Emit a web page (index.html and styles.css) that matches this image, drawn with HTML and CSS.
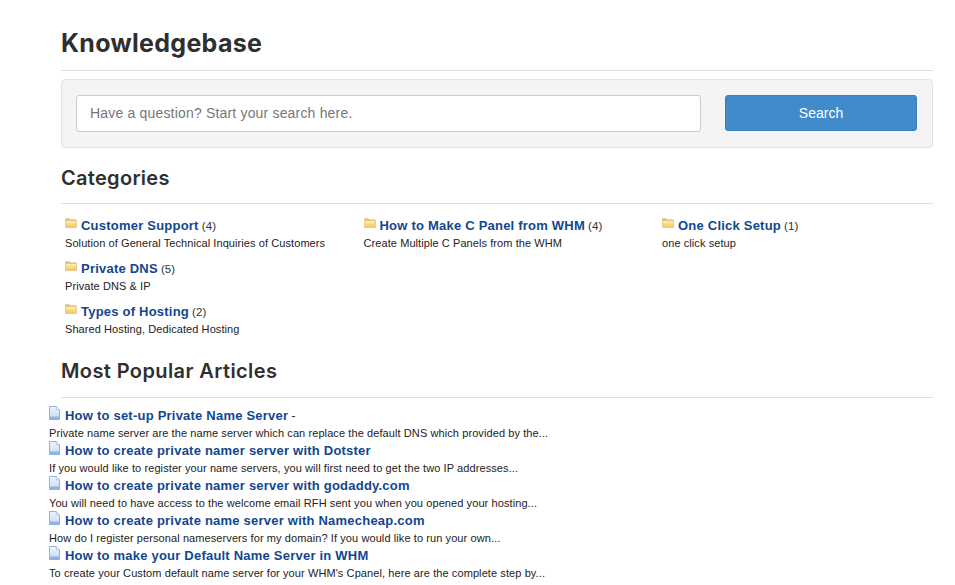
FILE: index.html
```html
<!DOCTYPE html>
<html lang="en">
<head>
<meta charset="utf-8">
<title>Knowledgebase</title>
<link rel="stylesheet" href="styles.css">
</head>
<body>
<svg class="defs" width="0" height="0" aria-hidden="true">
  <defs>
    <linearGradient id="fg" x1="0" y1="0" x2="0" y2="1"><stop offset="0" stop-color="#fdf0b0"/><stop offset="1" stop-color="#f2c862"/></linearGradient>
    <linearGradient id="dg" x1="0" y1="0" x2="0" y2="1"><stop offset="0" stop-color="#eef5fc"/><stop offset="1" stop-color="#c4daf3"/></linearGradient>
    <symbol id="folder" viewBox="0 0 12 10">
      <path d="M.5 9.5V1.2c0-.4.3-.7.7-.7h3l1 1.3h5.6c.4 0 .7.3.7.7v7z" fill="#e8c27a" stroke="#e3c58d" stroke-width=".8"/>
      <rect x="1" y="3" width="10" height="6" fill="url(#fg)"/>
    </symbol>
    <symbol id="doc" viewBox="0 0 11 14">
      <path d="M.5.5h6.8l3.2 3.2v9.8H.5z" fill="url(#dg)" stroke="#8fb2de"/>
      <path d="M7.3.5v3.2h3.2" fill="#fff" stroke="#8fb2de" stroke-width=".7"/>
      <rect x="1" y="10.5" width="9" height="2.5" fill="#8fb4e3"/>
    </symbol>
  </defs>
</svg>
<main class="page">
  <h1 class="title">Knowledgebase</h1>
  <form class="search-well">
    <input class="search-input" type="text" placeholder="Have a question? Start your search here.">
    <button class="search-btn" type="button">Search</button>
  </form>

  <h2 class="section-title">Categories</h2>
  <div class="cats">
    <div class="cat">
      <div class="cat-head"><svg class="ic-folder"><use href="#folder"/></svg><a class="link" href="#">Customer Support</a> <span class="count">(4)</span></div>
      <p class="desc">Solution of General Technical Inquiries of Customers</p>
    </div>
    <div class="cat">
      <div class="cat-head"><svg class="ic-folder"><use href="#folder"/></svg><a class="link" href="#">How to Make C Panel from WHM</a> <span class="count">(4)</span></div>
      <p class="desc">Create Multiple C Panels from the WHM</p>
    </div>
    <div class="cat">
      <div class="cat-head"><svg class="ic-folder"><use href="#folder"/></svg><a class="link" href="#">One Click Setup</a> <span class="count">(1)</span></div>
      <p class="desc">one click setup</p>
    </div>
    <div class="cat">
      <div class="cat-head"><svg class="ic-folder"><use href="#folder"/></svg><a class="link" href="#">Private DNS</a> <span class="count">(5)</span></div>
      <p class="desc">Private DNS &amp; IP</p>
    </div>
    <div class="cat cat-first">
      <div class="cat-head"><svg class="ic-folder"><use href="#folder"/></svg><a class="link" href="#">Types of Hosting</a> <span class="count">(2)</span></div>
      <p class="desc">Shared Hosting, Dedicated Hosting</p>
    </div>
  </div>

  <h2 class="section-title popular">Most Popular Articles</h2>
  <div class="articles">
    <div class="article">
      <div class="art-head"><svg class="ic-doc"><use href="#doc"/></svg><a class="link" href="#">How to set-up Private Name Server</a> <span class="dash">-</span></div>
      <p class="desc art-desc">Private name server are the name server which can replace the default DNS which provided by the...</p>
    </div>
    <div class="article">
      <div class="art-head"><svg class="ic-doc"><use href="#doc"/></svg><a class="link" href="#">How to create private namer server with Dotster</a></div>
      <p class="desc art-desc">If you would like to register your name servers, you will first need to get the two IP addresses...</p>
    </div>
    <div class="article">
      <div class="art-head"><svg class="ic-doc"><use href="#doc"/></svg><a class="link" href="#">How to create private namer server with godaddy.com</a></div>
      <p class="desc art-desc">You will need to have access to the welcome email RFH sent you when you opened your hosting...</p>
    </div>
    <div class="article">
      <div class="art-head"><svg class="ic-doc"><use href="#doc"/></svg><a class="link" href="#">How to create private name server with Namecheap.com</a></div>
      <p class="desc art-desc">How do I register personal nameservers for my domain? If you would like to run your own...</p>
    </div>
    <div class="article">
      <div class="art-head"><svg class="ic-doc"><use href="#doc"/></svg><a class="link" href="#">How to make your Default Name Server in WHM</a></div>
      <p class="desc art-desc">To create your Custom default name server for your WHM's Cpanel, here are the complete step by...</p>
    </div>
  </div>
</main>
</body>
</html>
```

FILE: styles.css
```css
html, body { margin: 0; padding: 0; background: #fff; }
body { font-family: "Liberation Sans", Arial, sans-serif; color: #333; overflow: hidden; height: 585px; }
.defs { position: absolute; }
.page { width: 872px; margin-left: 61px; padding-top: 26px; }
.title {
  font-family: Inter, "Liberation Sans", sans-serif;
  font-weight: 700; font-size: 25px; line-height: 35px; color: #2f2f2f; letter-spacing: .3px;
  margin: 0; padding-bottom: 9px; border-bottom: 1px solid #ddd;
}
.search-well {
  display: flex; align-items: flex-start; justify-content: space-between;
  box-sizing: border-box; height: 69px; margin-top: 8px; padding: 15px 15px 0 14px;
  background: #f4f4f4; border: 1px solid #e3e3e3; border-radius: 4px;
}
.search-input {
  box-sizing: border-box; width: 625px; height: 37px; padding: 0 13px 2px;
  font: 14px "Liberation Sans", Arial, sans-serif; color: #555; letter-spacing: .18px;
  background: #fff; border: 1px solid #ccc; border-radius: 3px; outline: none;
}
.search-input::placeholder { color: #777; opacity: 1; }
.search-btn {
  width: 192px; height: 36px; padding: 0;
  font: 14px "Liberation Sans", Arial, sans-serif; color: #fff;
  background: #428bca; border: 1px solid #357ebd; border-radius: 3px;
}
.section-title {
  font-family: Inter, "Liberation Sans", sans-serif;
  font-weight: 600; font-size: 20px; line-height: 28px; color: #2f2f2f; letter-spacing: .3px;
  margin: 16px 0 0; padding-bottom: 11px; border-bottom: 1px solid #ddd;
}
.section-title.popular { margin-top: 19px; padding-bottom: 12px; letter-spacing: .4px; }
.cats {
  display: grid; grid-template-columns: repeat(3, 298.5px);
  padding: 13px 0 0 4px; row-gap: 8px;
}
.cat-first { grid-column: 1; }
.cat-head { font-size: 11px; height: 17px; line-height: 17px; white-space: nowrap; }
.link {
  color: #12478e; font-size: 13px; font-weight: 700; letter-spacing: .22px; text-decoration: none;
}
.count { font-size: 11.5px; color: #333; letter-spacing: .1px; }
.desc { margin: 0; font-size: 11px; line-height: 18px; color: #222; white-space: nowrap; letter-spacing: .08px; }
.ic-folder { width: 12px; height: 10px; margin-right: 4px; vertical-align: 2px; }
.articles { margin: 8px 0 0 -12px; }
.art-head { height: 18px; line-height: 17px; font-size: 11px; white-space: nowrap; }
.art-desc { height: 17px; line-height: 19px; letter-spacing: .09px; }
.dash { font-size: 13px; color: #333; }
.ic-doc { width: 11px; height: 14px; margin-right: 5px; vertical-align: 0; }
```
